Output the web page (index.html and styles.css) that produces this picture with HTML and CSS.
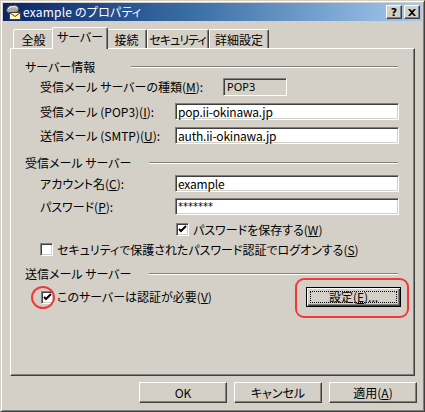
FILE: index.html
```html
<!DOCTYPE html>
<html lang="ja">
<head>
<meta charset="utf-8">
<title>example のプロパティ</title>
<link rel="stylesheet" href="styles.css">
</head>
<body>
<div class="window">
  <div class="titlebar">
    <svg class="app-icon" width="16" height="16" viewBox="0 0 16 16">
      <path d="M1 6 L4 2 L11 1 L14 4 L13 8 L3 9 Z" fill="#a8a8a8" stroke="#404040" stroke-width="1"/>
      <path d="M3 5 L5 3 L10 2.5 L12 4.5" fill="none" stroke="#ffffff" stroke-width="1"/>
      <rect x="4.5" y="8.5" width="11" height="7" fill="#fff6b0" stroke="#404040"/>
      <path d="M4.5 8.5 L10 12.5 L15.5 8.5" fill="none" stroke="#404040"/>
    </svg>
    <span class="title">example のプロパティ</span>
    <div class="tb-buttons">
      <span class="tbtn help">?</span>
      <span class="tbtn close">
        <svg width="8" height="7" viewBox="0 0 8 7"><path d="M0 0 L2 0 L4 2 L6 0 L8 0 L5 3.5 L8 7 L6 7 L4 5 L2 7 L0 7 L3 3.5 Z" fill="#000"/></svg>
      </span>
    </div>
  </div>

  <div class="tabs">
    <div class="tab w-general">全般</div>
    <div class="tab active w-server">サーバー</div>
    <div class="tab w-conn">接続</div>
    <div class="tab w-sec">セキュリティ</div>
    <div class="tab w-adv">詳細設定</div>
  </div>

  <div class="panel">
    <div class="group-head first">
      <span class="group-label short">サーバー情報</span><i class="etch"></i>
    </div>
    <div class="row r1">
      <span class="lbl wide">受信メール サーバーの種類(<u>M</u>):</span>
      <div class="readonly">POP3</div>
    </div>
    <div class="row r2">
      <span class="lbl">受信メール (POP3)(<u>I</u>):</span>
      <div class="field">pop.ii-okinawa.jp</div>
    </div>
    <div class="row r3">
      <span class="lbl">送信メール (SMTP)(<u>U</u>):</span>
      <div class="field">auth.ii-okinawa.jp</div>
    </div>

    <div class="group-head g2">
      <span class="group-label long">受信メール サーバー</span><i class="etch"></i>
    </div>
    <div class="row r4">
      <span class="lbl">アカウント名(<u>C</u>):</span>
      <div class="field">example</div>
    </div>
    <div class="row r5">
      <span class="lbl">パスワード(<u>P</u>):</span>
      <div class="field pw">*******</div>
    </div>
    <div class="row r6">
      <span class="check on">
        <svg width="9" height="9" viewBox="0 0 9 9"><path d="M1 4 L3 6 L8 1" fill="none" stroke="#000" stroke-width="2"/></svg>
      </span>
      <span class="check-text">パスワードを保存する(<u>W</u>)</span>
    </div>
    <div class="row r7">
      <span class="check"></span>
      <span class="check-text">セキュリティで保護されたパスワード認証でログオンする(<u>S</u>)</span>
    </div>

    <div class="group-head g3">
      <span class="group-label long">送信メール サーバー</span><i class="etch"></i>
    </div>
    <div class="row r8">
      <span class="check on marked">
        <svg width="9" height="9" viewBox="0 0 9 9"><path d="M1 4 L3 6 L8 1" fill="none" stroke="#000" stroke-width="2"/></svg>
      </span>
      <span class="check-text tight">このサーバーは認証が必要(<u>V</u>)</span>
      <div class="btn default settings">設定(<u>E</u>)...</div>
    </div>
  </div>

  <div class="footer">
    <div class="btn foot">OK</div>
    <div class="btn foot">キャンセル</div>
    <div class="btn foot">適用(<u>A</u>)</div>
  </div>
</div>
</body>
</html>
```

FILE: styles.css
```css
html, body {
  margin: 0;
  padding: 0;
  background: #d4d0c8;
}

body {
  font-family: "Noto Sans CJK JP", "Noto Sans", sans-serif;
  font-size: 12px;
  line-height: 14px;
  font-feature-settings: "palt";
  color: #000;
}

u { text-decoration: underline; text-underline-offset: 1px; }

.window {
  width: 425px;
  height: 412px;
  box-sizing: border-box;
  border: 1px solid;
  border-color: #d4d0c8 #404040 #404040 #d4d0c8;
  box-shadow: inset 1px 1px #ffffff, inset -1px -1px #808080;
  padding: 2px;
  display: flex;
  flex-direction: column;
  background: #d4d0c8;
}

/* title bar */
.titlebar {
  height: 18px;
  flex: none;
  display: flex;
  align-items: center;
  padding: 0 2px;
  background: linear-gradient(to right, #0a246a 0%, #3a6ea5 45%, #a6caf0 100%);
}

.app-icon { flex: none; }

.title {
  color: #ffffff;
  margin-left: 2px;
  font-size: 12px;
  line-height: 14px;
  letter-spacing: 0.2px;
  white-space: nowrap;
}

.tb-buttons {
  margin-left: auto;
  display: flex;
  gap: 2px;
}

.tbtn {
  width: 16px;
  height: 14px;
  box-sizing: border-box;
  background: #d4d0c8;
  border: 1px solid;
  border-color: #ffffff #404040 #404040 #ffffff;
  box-shadow: inset -1px -1px #808080;
  display: flex;
  align-items: center;
  justify-content: center;
}

.tbtn.help {
  font-family: "DejaVu Sans", sans-serif;
  font-weight: bold;
  font-size: 11px;
  line-height: 11px;
  padding-top: 1px;
}

/* tabs */
.tabs {
  flex: none;
  margin-top: 6px;
  height: 21px;
  padding-left: 10px;
  display: flex;
  align-items: flex-end;
  position: relative;
  z-index: 1;
}

.tab {
  box-sizing: border-box;
  height: 19px;
  flex: none;
  border-top: 1px solid #ffffff;
  border-left: 1px solid #ffffff;
  border-right: 1px solid #404040;
  border-radius: 2px 2px 0 0;
  box-shadow: inset -1px 0 #808080;
  background: #d4d0c8;
  display: flex;
  align-items: center;
  justify-content: center;
  padding-top: 1px;
  white-space: nowrap;
  overflow: hidden;
}

.w-general { width: 41px; }
.w-server  { width: 52px; }
.w-conn    { width: 41px; }
.w-sec     { width: 62px; letter-spacing: -1px; padding-right: 1px; }
.w-adv     { width: 60px; }

.tab.active {
  height: 22px;
  width: 56px;
  margin: 0 -2px -1px -2px;
  padding-top: 0;
  padding-bottom: 3px;
  position: relative;
  z-index: 2;
}

/* panel */
.panel {
  flex: none;
  margin-left: 7px;
  width: 405px;
  height: 328px;
  box-sizing: border-box;
  border: 1px solid;
  border-color: #ffffff #404040 #404040 #ffffff;
  box-shadow: inset -1px -1px #808080;
  padding: 11px 16px 0 14px;
  display: flex;
  flex-direction: column;
}

.group-head {
  display: flex;
  align-items: center;
  height: 14px;
}
.group-head.g2 { margin-top: 12px; }
.group-head.g3 { margin-top: 11px; }

.group-label.short { width: 106px; flex: none; }
.group-label.long { width: 124px; flex: none; }

.etch {
  flex: 1;
  height: 0;
  border-top: 1px solid #808080;
  border-bottom: 1px solid #ffffff;
}

.row {
  display: flex;
  align-items: center;
  padding-left: 15px;
}

.r1 { margin-top: 4px; height: 18px; }
.r2 { margin-top: 7px; height: 17px; }
.r3 { margin-top: 7px; height: 17px; }
.r4 { margin-top: 5px; height: 17px; }
.r5 { margin-top: 6px; height: 17px; }
.r6 { margin-top: 8px; height: 13px; padding-left: 151px; }
.r7 { margin-top: 7px; height: 13px; }
.r8 { margin-top: 6px; height: 20px; padding-left: 16px; }

.lbl { width: 135px; flex: none; white-space: nowrap; }
.lbl.wide { width: 183px; }

.readonly {
  box-sizing: border-box;
  width: 64px;
  height: 18px;
  border: 1px solid;
  border-color: #808080 #ffffff #ffffff #808080;
  box-shadow: inset 1px 1px #404040, inset -1px -1px #d4d0c8;
  padding-left: 3px;
  display: flex;
  align-items: center;
  font-family: "Noto Sans", sans-serif;
  font-size: 11px;
}

.field {
  box-sizing: border-box;
  width: 224px;
  height: 17px;
  flex: none;
  border: 1px solid;
  border-color: #808080 #ffffff #ffffff #808080;
  box-shadow: inset 1px 1px #404040, inset -1px -1px #d4d0c8;
  background: #ffffff;
  padding-left: 2px;
  display: flex;
  align-items: center;
  white-space: nowrap;
  letter-spacing: -0.2px;
}

.field.pw { letter-spacing: 0; font-family: "DejaVu Sans", sans-serif; font-size: 10px; }

.check {
  box-sizing: border-box;
  width: 13px;
  height: 13px;
  flex: none;
  border: 1px solid;
  border-color: #808080 #ffffff #ffffff #808080;
  box-shadow: inset 1px 1px #404040, inset -1px -1px #d4d0c8;
  background: #ffffff;
  display: flex;
  align-items: center;
  justify-content: center;
  position: relative;
}

.check.marked::after {
  content: "";
  position: absolute;
  left: -11px;
  top: -6px;
  width: 20px;
  height: 19px;
  border: 2px solid #ee3a3a;
  border-radius: 50%;
}

.check-text { margin-left: 4px; white-space: nowrap; }
.check-text.tight { margin-left: 3px; }

.btn {
  box-sizing: border-box;
  background: #d4d0c8;
  border: 1px solid;
  border-color: #ffffff #404040 #404040 #ffffff;
  box-shadow: inset -1px -1px #808080;
  display: flex;
  align-items: center;
  justify-content: center;
  white-space: nowrap;
}

.btn.settings {
  margin-left: auto;
  margin-right: -3px;
  width: 95px;
  height: 20px;
  position: relative;
}

.btn.default {
  border: 1px solid #000000;
  box-shadow: inset 1px 1px #ffffff, inset -1px -1px #404040, inset -2px -2px #808080;
}

.btn.default::before {
  content: "";
  position: absolute;
  left: 3px;
  top: 3px;
  right: 3px;
  bottom: 3px;
  border: 1px dotted #000000;
}

.btn.settings::after {
  content: "";
  position: absolute;
  left: -12px;
  top: -10px;
  right: -9px;
  bottom: -12px;
  border: 2px solid #ee3a3a;
  border-radius: 9px;
}

.footer {
  flex: none;
  margin-top: 6px;
  padding-right: 5px;
  display: flex;
  justify-content: flex-end;
  gap: 7px;
}

.btn.foot {
  width: 88px;
  height: 21px;
}
```
